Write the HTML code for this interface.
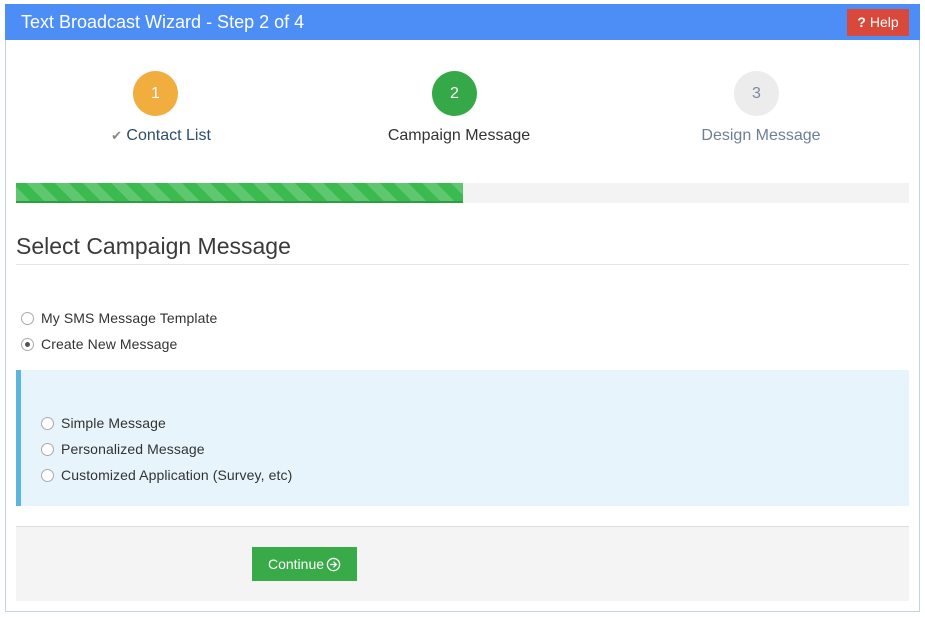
<!DOCTYPE html>
<html><head><style>
*{box-sizing:border-box;margin:0;padding:0}
body{width:925px;height:617px;background:#fff;font-family:"Liberation Sans",sans-serif;position:relative;overflow:hidden;color:#333}
.panel{position:absolute;left:5px;top:4px;width:915px;height:608px;border:1px solid #c5d5e0}
.hdr{position:absolute;left:5px;top:4px;width:915px;height:36px;background:#4d8ef6;color:#fff;font-size:18px;line-height:36px;padding-left:16px}
.help{position:absolute;left:847px;top:9px;width:62px;height:27px;background:#d9493b;color:#fff;font-size:14px;line-height:27px;text-align:center}
.c{position:absolute;width:45px;height:45px;border-radius:50%;top:71px;color:#fff;font-size:16px;text-align:center;line-height:45px}
.lbl{position:absolute;top:127px;font-size:16px;width:300px;text-align:center}
.bar{position:absolute;left:16px;top:183px;width:893px;height:20px;background:#f3f3f3}
.fill{position:absolute;left:0;top:0;width:447px;height:20px;background:#3bbb4f;background-image:repeating-linear-gradient(45deg,rgba(255,255,255,.18) 0 10px,transparent 10px 20px);border-bottom:2px solid #2e9e42}
h2{position:absolute;left:16px;top:233px;font-size:23px;font-weight:normal;color:#3a3a3a}
.hr{position:absolute;left:16px;top:264px;width:893px;border-top:1px solid #e5e5e5}
.r{position:absolute;font-size:14px;color:#333;line-height:16px;letter-spacing:.1px}
.r i{display:inline-block;width:13px;height:13px;border:1px solid #aaa;border-radius:50%;vertical-align:-2px;margin-right:7px;background:#fff;position:relative}
.r i.on:after{content:"";position:absolute;left:3px;top:3px;width:5px;height:5px;border-radius:50%;background:#555}
.box{position:absolute;left:16px;top:370px;width:893px;height:136px;background:#e7f4fb;border-left:5px solid #5bb5de}
.foot{position:absolute;left:16px;top:526px;width:893px;height:75px;background:#f4f4f4;border-top:1px solid #ddd}
.btn{position:absolute;left:252px;top:547px;width:105px;height:34px;background:#38aa48;color:#fff;font-size:14px;line-height:34px;text-align:center}
.btn svg{vertical-align:-3px}
</style></head><body>
<div class="panel"></div>
<div class="hdr">Text Broadcast Wizard - Step 2 of 4</div>
<div class="help"><b>?</b> Help</div>
<div class="c" style="left:133px;background:#f1ae3f">1</div>
<div class="c" style="left:432px;background:#35a848">2</div>
<div class="c" style="left:734px;background:#ececec;color:#7a8aa0">3</div>
<div class="lbl" style="left:11px;color:#2c4f6e"><span style="color:#888;font-size:13px">✔</span> Contact List</div>
<div class="lbl" style="left:309px;color:#333">Campaign Message</div>
<div class="lbl" style="left:611px;color:#6d8096">Design Message</div>
<div class="bar"><div class="fill"></div></div>
<h2>Select Campaign Message</h2>
<div class="hr"></div>
<div class="r" style="left:21px;top:310px"><i></i>My SMS Message Template</div>
<div class="r" style="left:21px;top:336px"><i class="on"></i>Create New Message</div>
<div class="box"></div>
<div class="r" style="left:41px;top:415px"><i></i>Simple Message</div>
<div class="r" style="left:41px;top:441px"><i></i>Personalized Message</div>
<div class="r" style="left:41px;top:467px"><i></i>Customized Application (Survey, etc)</div>
<div class="foot"></div>
<div class="btn">Continue<svg width="15" height="15" viewBox="0 0 16 16" style="margin-left:2px"><circle cx="8" cy="8" r="6.5" fill="none" stroke="#fff" stroke-width="1.4"/><path d="M4.5 8h6.5M8 5l3 3-3 3" fill="none" stroke="#fff" stroke-width="1.4"/></svg></div>
</body></html>
